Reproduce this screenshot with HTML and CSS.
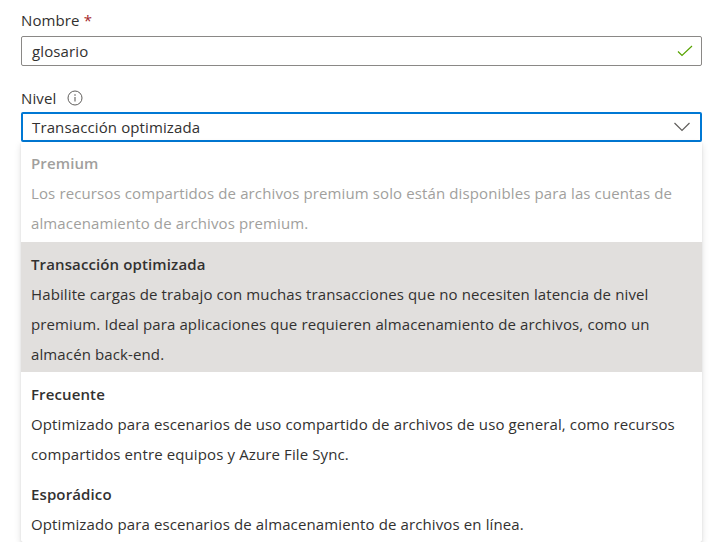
FILE: index.html
```html
<!DOCTYPE html>
<html lang="es">
<head>
<meta charset="utf-8">
<link rel="stylesheet" href="styles.css">
</head>
<body>
<div class="form">
  <div class="field">
    <label class="label">Nombre <span class="req">*</span></label>
    <div class="input">
      <span class="value">glosario</span>
      <svg class="check" width="16" height="12" viewBox="0 0 16 12"><path d="M1 6.5 L5 10.5 L15 1" fill="none" stroke="#57a300" stroke-width="1.2"/></svg>
    </div>
  </div>
  <div class="field nivel">
    <label class="label">Nivel
      <svg class="info" width="16" height="16" viewBox="0 0 16 16"><circle cx="8" cy="8" r="7" fill="none" stroke="#605e5c" stroke-width="1"/><circle cx="8" cy="5" r="0.8" fill="#605e5c"/><path d="M8 7 V11.5" stroke="#605e5c" stroke-width="1.1"/></svg>
    </label>
    <div class="select">
      <span class="value">Transacción optimizada</span>
      <svg class="chev" width="16" height="10" viewBox="0 0 16 10"><path d="M0.5 1 L8 8.5 L15.5 1" fill="none" stroke="#605e5c" stroke-width="1.2"/></svg>
    </div>
    <div class="dropdown">
      <div class="option disabled">
        <div class="title">Premium</div>
        <div class="desc">Los recursos compartidos de archivos premium solo están disponibles para las cuentas de almacenamiento de archivos premium.</div>
      </div>
      <div class="option selected">
        <div class="title">Transacción optimizada</div>
        <div class="desc">Habilite cargas de trabajo con muchas transacciones que no necesiten latencia de nivel premium. Ideal para aplicaciones que requieren almacenamiento de archivos, como un almacén back-end.</div>
      </div>
      <div class="option">
        <div class="title">Frecuente</div>
        <div class="desc">Optimizado para escenarios de uso compartido de archivos de uso general, como recursos compartidos entre equipos y Azure File Sync.</div>
      </div>
      <div class="option">
        <div class="title">Esporádico</div>
        <div class="desc">Optimizado para escenarios de almacenamiento de archivos en línea.</div>
      </div>
    </div>
  </div>
</div>
</body>
</html>
```
FILE: styles.css
```css
html, body {
  margin: 0;
  padding: 0;
  background: #ffffff;
}
body {
  font-family: "Open Sans", "Noto Sans", sans-serif;
  font-size: 15px;
  letter-spacing: 0.12px;
  color: #323130;
}
.form {
  padding: 9px 11px 0 21px;
}
.field {
  display: flex;
  flex-direction: column;
}
.label {
  display: flex;
  align-items: center;
  height: 22px;
  line-height: 22px;
  margin-bottom: 5px;
}
.req {
  color: #a4262c;
  margin-left: 4px;
}
.info {
  margin-left: 11px;
}
.nivel {
  margin-top: 21px;
}
.nivel .label {
  margin-bottom: 3px;
}
.input {
  height: 30px;
  box-sizing: border-box;
  border: 1px solid #8a8886;
  border-radius: 2px;
  display: flex;
  align-items: center;
  justify-content: space-between;
  padding: 0 8px 0 10px;
}
.select {
  height: 30px;
  box-sizing: border-box;
  border: 2px solid #0078d4;
  border-radius: 2px;
  display: flex;
  align-items: center;
  justify-content: space-between;
  padding: 0 10px 0 9px;
}
.dropdown {
  background: #ffffff;
  box-shadow: 0 3px 7px rgba(0,0,0,0.13), 0 1px 2px rgba(0,0,0,0.10);
  border-radius: 0 0 2px 2px;
}
.option {
  padding: 7px 20px 3px 10px;
  line-height: 30px;
}
.option.disabled {
  color: #a19f9d;
  padding-top: 6px;
  padding-bottom: 4px;
}
.option.selected {
  background: #e1dfdd;
}
.title {
  font-weight: 600;
}
```
